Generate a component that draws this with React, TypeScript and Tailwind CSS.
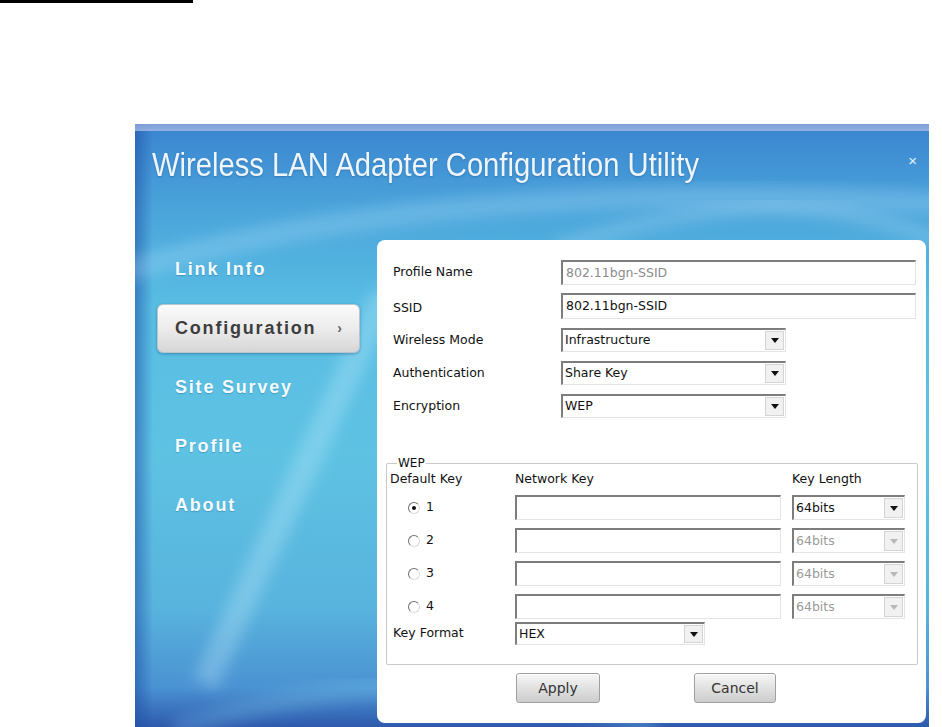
const sunken =
  'border-t-2 border-l-2 border-r border-b border-t-[#7d7d7d] border-l-[#7d7d7d] border-r-[#e4e4e4] border-b-[#e4e4e4] bg-white'

function TextBox({ value, muted, w, h }: { value?: string; muted?: boolean; w: string; h: string }) {
  return (
    <div className={`${sunken} ${w} ${h} flex items-center pl-[3px] ${muted ? 'text-[#8c8c8c]' : 'text-[#111]'}`}>
      {value}
    </div>
  )
}

function Combo({ value, disabled, w, h }: { value: string; disabled?: boolean; w: string; h: string }) {
  return (
    <div className={`${sunken} ${w} ${h} flex items-stretch`}>
      <div className={`flex-1 flex items-center pl-[2px] ${disabled ? 'text-[#9a9a9a]' : 'text-[#111]'}`}>{value}</div>
      <div className="w-[19px] my-[1px] mr-[1px] bg-[#f1f1f1] border border-[#d4d4d4] flex items-center justify-center">
        <svg width="8" height="5" viewBox="0 0 8 5">
          <polygon points="0,0 8,0 4,5" fill={disabled ? '#b8b8b8' : '#111'} />
        </svg>
      </div>
    </div>
  )
}

function Radio({ checked }: { checked?: boolean }) {
  return (
    <div className="w-[12px] h-[12px] rounded-full border border-t-[#6f6f6f] border-l-[#6f6f6f] border-r-[#dcdcdc] border-b-[#dcdcdc] bg-white flex items-center justify-center">
      {checked && <div className="w-[4px] h-[4px] rounded-full bg-[#111]" />}
    </div>
  )
}

const nav = ['Link Info', 'Configuration', 'Site Survey', 'Profile', 'About']

export default function App() {
  return (
    <div className="w-[942px] h-[727px] bg-white overflow-hidden font-['DejaVu_Sans',sans-serif]">
      <div className="h-[3px] w-[193px] bg-black" />

      {/* window */}
      <div className="relative ml-[135px] mt-[121px] w-[794px] h-[606px] flex flex-col overflow-hidden bg-[linear-gradient(180deg,#3a84d0_0%,#4aa4da_14%,#58bde3_30%,#5ec2e3_55%,#58b3dd_80%,#4a92d2_93%,#2c55aa_100%)]">
        <svg className="absolute inset-0" width="794" height="606" viewBox="0 0 794 606">
          <defs>
            <filter id="b" x="-20%" y="-20%" width="140%" height="140%">
              <feGaussianBlur stdDeviation="7" />
            </filter>
            <linearGradient id="lft" x1="0" x2="1" y1="0" y2="0">
              <stop offset="0" stopColor="#1e4fa6" stopOpacity="0.55" />
              <stop offset="1" stopColor="#1e4fa6" stopOpacity="0" />
            </linearGradient>
          </defs>
          <rect x="0" y="0" width="18" height="606" fill="url(#lft)" />
          <path d="M-20 150 Q 300 50 820 80" stroke="#bfe8ff" strokeOpacity="0.25" strokeWidth="22" fill="none" filter="url(#b)" />
          <path d="M420 125 Q 640 50 800 115" stroke="#d8f2ff" strokeOpacity="0.22" strokeWidth="14" fill="none" filter="url(#b)" />
          <path d="M250 170 L 70 560" stroke="#c8f0ff" strokeOpacity="0.3" strokeWidth="26" fill="none" filter="url(#b)" />
          <path d="M40 606 Q 300 520 520 606" stroke="#7fd0f0" strokeOpacity="0.25" strokeWidth="20" fill="none" filter="url(#b)" />
        </svg>

        {/* top strip */}
        <div className="relative h-[7px] bg-[linear-gradient(180deg,#8ea6dc,#a9bde6)] opacity-80" />

        {/* title */}
        <div className="relative h-[109px] flex items-start justify-between pl-[17px] pr-[12px] pt-[17px]">
          <div className="inline-block origin-left scale-x-[0.885] text-[33px] leading-[33px] text-[#eef5fb] whitespace-nowrap font-['Liberation_Sans',sans-serif] [text-shadow:0_1px_2px_rgba(20,60,120,0.35)]">
            Wireless LAN Adapter Configuration Utility
          </div>
          <div className="mt-[5px] text-[15px] leading-[15px] text-[#e8f2fb] font-['Liberation_Sans',sans-serif]">×</div>
        </div>

        {/* body */}
        <div className="relative flex">
          <div className="w-[242px] flex flex-col font-['Liberation_Sans',sans-serif] text-[18px] font-bold tracking-[1.8px]">
            {nav.map((n) =>
              n === 'Configuration' ? (
                <div key={n} className="h-[59px] flex items-center">
                  <div className="ml-[22px] w-[203px] h-[49px] rounded-[6px] border border-[#b9c4cc] bg-linear-to-b from-[#fbfbfb] via-[#ececec] to-[#d6d6d6] shadow-[0_1px_3px_rgba(0,40,90,0.35)] flex items-center justify-between pl-[17px] pr-[17px] text-[#3d3d3d]">
                    <span>{n}</span>
                    <span className="text-[14px] text-[#666] tracking-normal">›</span>
                  </div>
                </div>
              ) : (
                <div key={n} className="h-[59px] flex items-center pl-[40px] text-[#f4fbff] [text-shadow:0_1px_1px_rgba(20,70,120,0.3)]">
                  {n}
                </div>
              )
            )}
          </div>

          {/* panel */}
          <div className="w-[549px] h-[483px] bg-white rounded-[8px] text-[12.5px] text-[#111]">
            <div className="pt-[20px] pl-[16px] flex flex-col">
              <div className="flex items-center h-[25px]">
                <div className="w-[168px]">Profile Name</div>
                <TextBox value="802.11bgn-SSID" muted w="w-[355px]" h="h-[25px]" />
              </div>
              <div className="flex items-center h-[26px] mt-[8px]">
                <div className="w-[168px] pt-[4px]">SSID</div>
                <TextBox value="802.11bgn-SSID" w="w-[355px]" h="h-[26px]" />
              </div>
              <div className="flex items-center h-[24px] mt-[9px]">
                <div className="w-[168px]">Wireless Mode</div>
                <Combo value="Infrastructure" w="w-[225px]" h="h-[24px]" />
              </div>
              <div className="flex items-center h-[24px] mt-[9px]">
                <div className="w-[168px]">Authentication</div>
                <Combo value="Share Key" w="w-[225px]" h="h-[24px]" />
              </div>
              <div className="flex items-center h-[24px] mt-[9px]">
                <div className="w-[168px]">Encryption</div>
                <Combo value="WEP" w="w-[225px]" h="h-[24px]" />
              </div>
            </div>

            {/* WEP group */}
            <div className="relative mt-[45px] ml-[9px] mr-[8px] border border-[#c9c9c9] rounded-[2px] pt-[7px] pb-[19px] pl-[3px]">
              <div className="absolute -top-[9px] left-[10px] bg-white px-[1px] text-[12px] leading-[16px]">WEP</div>
              <div className="flex h-[16px] leading-[16px]">
                <div className="w-[125px]">Default Key</div>
                <div className="w-[277px]">Network Key</div>
                <div>Key Length</div>
              </div>
              {[1, 2, 3, 4].map((k) => (
                <div key={k} className="flex items-center h-[25px] mt-[8px]">
                  <div className="w-[125px] pl-[18px] flex items-center gap-[6px]">
                    <Radio checked={k === 1} />
                    <span>{k}</span>
                  </div>
                  <TextBox w="w-[266px]" h="h-[25px]" />
                  <div className="ml-[11px]">
                    <Combo value="64bits" disabled={k !== 1} w="w-[113px]" h="h-[25px]" />
                  </div>
                </div>
              ))}
              <div className="flex items-center h-[23px] mt-[3px]">
                <div className="w-[125px] pl-[3px]">Key Format</div>
                <Combo value="HEX" w="w-[190px]" h="h-[23px]" />
              </div>
            </div>

            <div className="flex mt-[8px] pl-[139px] gap-[94px] text-[14px] text-[#333]">
              <button className="w-[84px] h-[30px] rounded-[3px] border border-[#a0a0a0] bg-linear-to-b from-[#f6f6f6] to-[#cdcdcd] shadow-[inset_0_1px_0_#fff]">
                Apply
              </button>
              <button className="w-[82px] h-[30px] rounded-[3px] border border-[#a0a0a0] bg-linear-to-b from-[#f6f6f6] to-[#cdcdcd] shadow-[inset_0_1px_0_#fff]">
                Cancel
              </button>
            </div>
          </div>
        </div>
      </div>
    </div>
  )
}
